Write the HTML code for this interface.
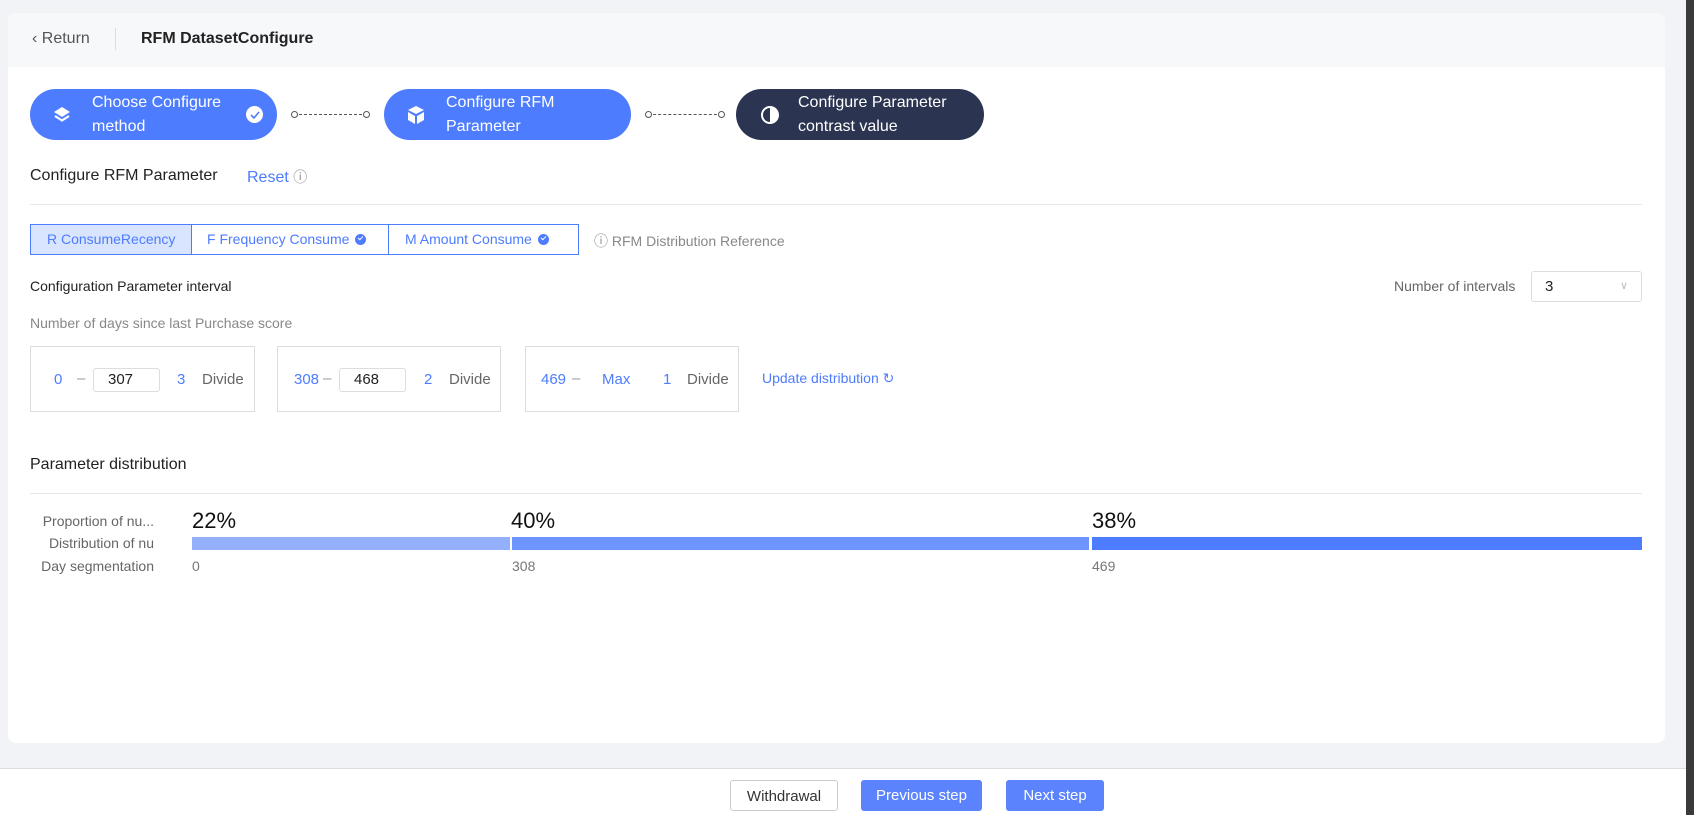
<!DOCTYPE html>
<html><head><meta charset="utf-8"><style>
*{box-sizing:border-box;margin:0;padding:0}
body{width:1694px;height:815px;background:#f2f3f7;font-family:"Liberation Sans",sans-serif;font-size:15px;color:#333;position:relative;overflow:hidden}
.a{position:absolute;white-space:nowrap}
.card{position:absolute;left:8px;top:13px;width:1657px;height:730px;background:#fff;border-radius:8px;overflow:hidden}
.hdr{position:absolute;left:0;top:0;width:100%;height:54px;background:#f7f8fa}
.pill{position:absolute;top:89px;height:51px;border-radius:26px;background:#4d7cfe;color:#fff;font-size:16px;line-height:24px}
.pill .t{position:absolute;left:62px;top:2px}
.conn{position:absolute;top:114px;height:0;border-top:1.5px dashed #555}
.conn:before,.conn:after{content:"";position:absolute;top:-4px;width:5px;height:5px;border:1px solid #555;border-radius:50%;background:#fff}
.conn:before{left:-3px}.conn:after{right:-3px}
.tab{position:absolute;top:224px;height:31px;border:1px solid #4d7cfe;color:#4d7cfe;line-height:29px;padding-left:16px;font-size:14px}
.chk{display:inline-block;width:11px;height:11px;border-radius:50%;background:#4d7cfe;vertical-align:-1px;margin-left:6px;position:relative}
.chk:after{content:"";position:absolute;left:3px;top:2px;width:4px;height:2px;border-left:1.5px solid #fff;border-bottom:1.5px solid #fff;transform:rotate(-45deg)}
.box{position:absolute;top:346px;height:66px;border:1px solid #ddd}
.blue{color:#4d7cfe}
.inp{position:absolute;top:21px;width:67px;height:24px;border:1px solid #ddd;border-radius:3px;padding-left:14px;line-height:22px;color:#222}
.lbl{position:absolute;right:1540px;color:#666;font-size:14px}
.btn{position:absolute;top:780px;height:31px;border-radius:3px;line-height:31px;text-align:center;font-size:15px}
</style></head><body>
<div class="card">
 <div class="hdr"></div>
 <div class="a" style="left:24px;top:17px;color:#555;font-size:16px">&#8249;&nbsp;Return</div>
 <div class="a" style="left:107px;top:15px;height:22px;border-left:1px solid #ddd"></div>
 <div class="a" style="left:133px;top:17px;font-weight:bold;font-size:16px;color:#222">RFM DatasetConfigure</div>
</div>
<div class="pill" style="left:30px;width:247px">
 <svg class="a" style="left:22px;top:16px" width="20" height="20" viewBox="0 0 20 20"><path d="M10 2L18 7 10 12 2 7Z" fill="#fff"/><path d="M3 11L10 15.5 17 11" stroke="#fff" stroke-width="2.2" fill="none"/></svg>
 <div class="t">Choose Configure<br>method</div>
 <div class="a" style="left:216px;top:17px;width:17px;height:17px;border-radius:50%;background:#fff"></div>
 <svg class="a" style="left:216px;top:17px" width="17" height="17"><path d="M5 9l3 3 5-6" stroke="#4d7cfe" stroke-width="1.6" fill="none"/></svg>
</div>
<div class="conn" style="left:294px;width:73px"></div>
<div class="pill" style="left:384px;width:247px">
 <svg class="a" style="left:23px;top:16px" width="18" height="20" viewBox="0 0 18 20"><path d="M9 1L17 5 9 9 1 5Z" fill="#fff"/><path d="M1 7l7 4v8l-7-4z M17 7l-7 4v8l7-4z" fill="#fff"/></svg>
 <div class="t">Configure RFM<br>Parameter</div>
</div>
<div class="conn" style="left:648px;width:74px"></div>
<div class="pill" style="left:736px;width:248px;background:#2b3450">
 <svg class="a" style="left:24px;top:16px" width="20" height="20"><circle cx="10" cy="10" r="8" stroke="#fff" stroke-width="2" fill="none"/><path d="M10 2a8 8 0 0 1 0 16z" fill="#fff"/></svg>
 <div class="t">Configure Parameter<br>contrast value</div>
</div>
<div class="a" style="left:30px;top:167px;font-size:16px;color:#222">Configure RFM Parameter</div>
<div class="a blue" style="left:247px;top:167px;font-size:16px">Reset <span style="color:#888;font-size:14px">&#9432;</span></div>
<div class="a" style="left:30px;top:204px;width:1612px;border-top:1px solid #e8e8e8"></div>
<div class="tab" style="left:30px;width:162px;background:#d9e4ff;color:#4d7cfe">R ConsumeRecency</div>
<div class="tab" style="left:191px;width:198px;border-left:none">F Frequency Consume<span class="chk"></span></div>
<div class="tab" style="left:388px;width:191px">M Amount Consume<span class="chk"></span></div>
<div class="a" style="left:594px;top:231px;color:#888;font-size:14px">&#9432; RFM Distribution Reference</div>
<div class="a" style="left:30px;top:278px;font-size:14px;color:#222">Configuration Parameter interval</div>
<div class="a" style="left:1394px;top:278px;font-size:14px;color:#666">Number of intervals</div>
<div class="a" style="left:1531px;top:271px;width:111px;height:31px;border:1px solid #ddd;border-radius:3px;padding-left:13px;line-height:29px;color:#222">3<span class="a" style="left:88px;top:0;color:#bbb;font-size:11px">&#8744;</span></div>
<div class="a" style="left:30px;top:315px;font-size:14px;color:#888">Number of days since last Purchase score</div>
<div class="box" style="left:30px;width:225px">
 <span class="a blue" style="left:23px;top:24px">0</span><span class="a" style="left:46px;top:23px;color:#999">–</span>
 <div class="inp" style="left:62px">307</div>
 <span class="a blue" style="left:146px;top:24px">3</span><span class="a" style="left:171px;top:24px;color:#666">Divide</span>
</div>
<div class="box" style="left:277px;width:224px">
 <span class="a blue" style="left:16px;top:24px">308</span><span class="a" style="left:45px;top:23px;color:#999">–</span>
 <div class="inp" style="left:61px">468</div>
 <span class="a blue" style="left:146px;top:24px">2</span><span class="a" style="left:171px;top:24px;color:#666">Divide</span>
</div>
<div class="box" style="left:525px;width:214px">
 <span class="a blue" style="left:15px;top:24px">469</span><span class="a" style="left:46px;top:23px;color:#999">–</span>
 <span class="a blue" style="left:76px;top:24px">Max</span>
 <span class="a blue" style="left:137px;top:24px">1</span><span class="a" style="left:161px;top:24px;color:#666">Divide</span>
</div>
<div class="a blue" style="left:762px;top:370px;font-size:14px">Update distribution &#8635;</div>
<div class="a" style="left:30px;top:456px;font-size:16px;color:#222">Parameter distribution</div>
<div class="a" style="left:30px;top:493px;width:1612px;border-top:1px solid #e8e8e8"></div>
<div class="a lbl" style="top:513px;text-align:right">Proportion of nu...</div>
<div class="a lbl" style="top:535px">Distribution of nu</div>
<div class="a lbl" style="top:558px">Day segmentation</div>
<div class="a" style="left:192px;top:508px;font-size:22px;color:#111">22%</div>
<div class="a" style="left:511px;top:508px;font-size:22px;color:#111">40%</div>
<div class="a" style="left:1092px;top:508px;font-size:22px;color:#111">38%</div>
<div class="a" style="left:192px;top:537px;width:318px;height:13px;background:#94b0fd"></div>
<div class="a" style="left:512px;top:537px;width:577px;height:13px;background:#6e95fd"></div>
<div class="a" style="left:1092px;top:537px;width:550px;height:13px;background:#4d7cfe"></div>
<div class="a" style="left:192px;top:558px;font-size:14px;color:#777">0</div>
<div class="a" style="left:512px;top:558px;font-size:14px;color:#777">308</div>
<div class="a" style="left:1092px;top:558px;font-size:14px;color:#777">469</div>
<div class="a" style="left:0;top:768px;width:1686px;height:47px;background:#fff;border-top:1px solid #ddd"></div>
<div class="btn" style="left:730px;width:108px;border:1px solid #ccc;background:#fff;color:#333">Withdrawal</div>
<div class="btn" style="left:861px;width:121px;background:#5b83fd;color:#fff">Previous step</div>
<div class="btn" style="left:1006px;width:98px;background:#5b83fd;color:#fff">Next step</div>
<div class="a" style="left:1686px;top:0;width:8px;height:815px;background:#3a3a3a"></div>
</body></html>
